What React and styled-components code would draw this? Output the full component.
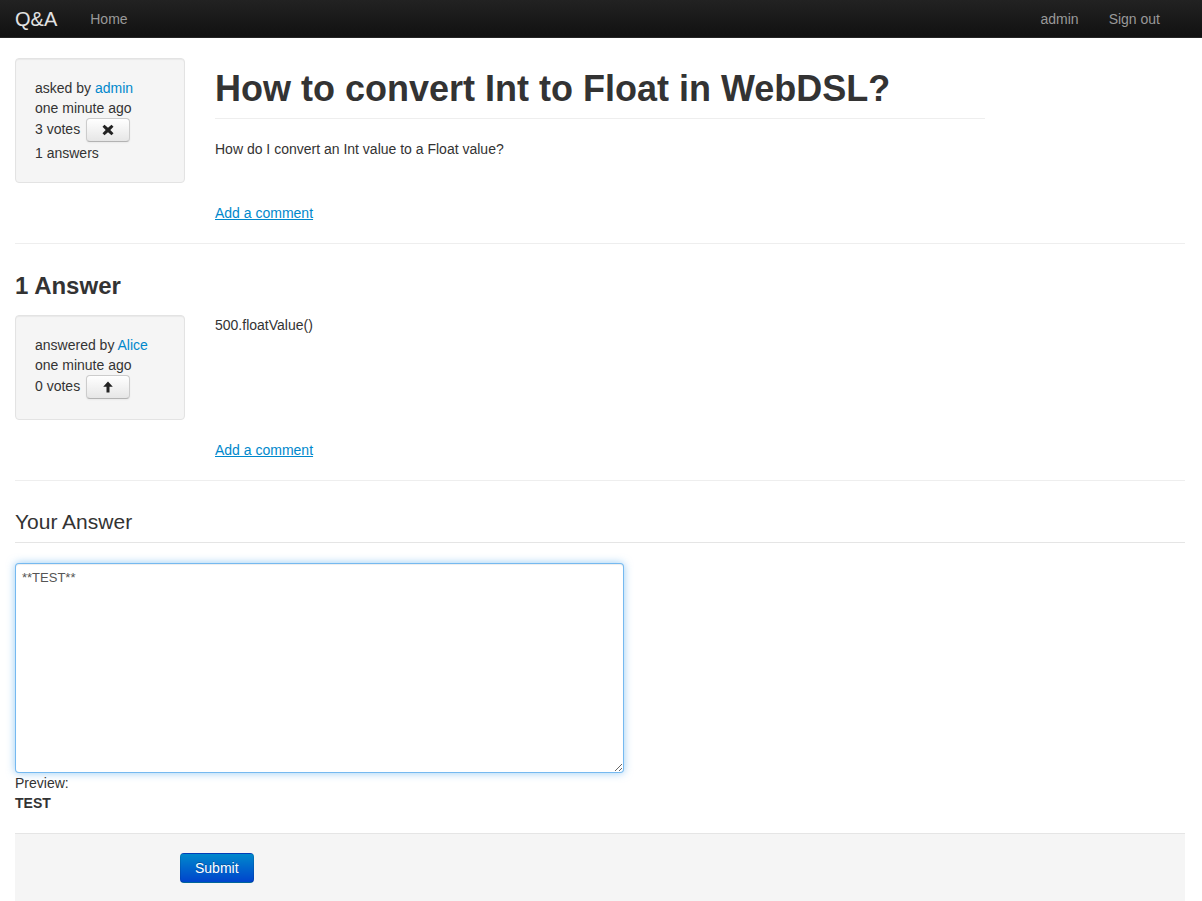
import React from "react";
import styled, { createGlobalStyle } from "styled-components";

const GlobalStyle = createGlobalStyle`
  body {
    margin: 0;
    font-family: "Liberation Sans", Helvetica, Arial, sans-serif;
    font-size: 14px;
    line-height: 20px;
    color: #333;
    background: #fff;
  }
  * { box-sizing: border-box; }
`;

const Navbar = styled.div`
  height: 38px;
  background-image: linear-gradient(to bottom, #222, #111);
  border-bottom: 1px solid #252525;
`;

const NavInner = styled.div`
  width: 1170px;
  margin-left: 15px;
  height: 100%;
  display: flex;
  align-items: center;
`;

const Brand = styled.a`
  font-size: 20px;
  color: #e2e2e2;
  margin-right: 18px;
  text-decoration: none;
`;

const NavGroup = styled.div`
  display: flex;
  margin-left: ${(p) => (p.right ? "auto" : "0")};
  margin-right: ${(p) => (p.right ? "10px" : "0")};
`;

const NavLink = styled.a`
  color: #999;
  padding: 0 15px;
  text-decoration: none;
`;

const Container = styled.div`
  width: 1170px;
  margin-left: 15px;
  padding-top: 20px;
`;

const Row = styled.div`
  display: flex;
  gap: 30px;
  align-items: flex-start;
`;

const Well = styled.div`
  width: 170px;
  flex: none;
  background: #f5f5f5;
  border: 1px solid #e3e3e3;
  border-radius: 4px;
  padding: 19px;
  box-shadow: inset 0 1px 1px rgba(0, 0, 0, 0.05);
`;

const VoteLine = styled.div`
  display: flex;
  align-items: flex-start;
  gap: 6px;
  height: 25px;
  line-height: 22px;
`;

const VoteButton = styled.button`
  width: 44px;
  height: 24px;
  padding: 0;
  display: flex;
  align-items: center;
  justify-content: center;
  background-image: linear-gradient(to bottom, #fff, #e6e6e6);
  border: 1px solid #ccc;
  border-bottom-color: #b3b3b3;
  border-radius: 4px;
  box-shadow: inset 0 1px 0 rgba(255, 255, 255, 0.2), 0 1px 2px rgba(0, 0, 0, 0.05);
`;

const Link = styled.a`
  color: #0088cc;
  text-decoration: ${(p) => (p.underline ? "underline" : "none")};
`;

const Main = styled.div`
  width: 770px;
`;

const Title = styled.h1`
  margin: 11px 0 20px;
  padding-bottom: 9px;
  border-bottom: 1px solid #eee;
  font-size: 36px;
  line-height: 40px;
  font-weight: bold;
  color: #333;
`;

const Para = styled.p`
  margin: 0;
`;

const CommentRow = styled.div`
  padding-left: 200px;
  margin-top: 20px;
`;

const Divider = styled.hr`
  margin: 20px 0;
  border: 0;
  border-top: 1px solid #eee;
  border-bottom: 1px solid #fff;
`;

const SectionTitle = styled.h3`
  margin: 21px 0 9px;
  font-size: 24px;
  line-height: 40px;
  font-weight: bold;
`;

const Legend = styled.div`
  margin-top: 20px;
  font-size: 21px;
  line-height: 40px;
  border-bottom: 1px solid #e5e5e5;
  margin-bottom: 20px;
`;

const AnswerInput = styled.textarea`
  display: block;
  width: 609px;
  height: 210px;
  padding: 4px 6px;
  font-family: "Liberation Sans", Helvetica, Arial, sans-serif;
  font-size: 13px;
  line-height: 20px;
  color: #555;
  border: 1px solid rgba(82, 168, 236, 0.8);
  border-radius: 4px;
  outline: 0;
  box-shadow: inset 0 1px 1px rgba(0, 0, 0, 0.075), 0 0 8px rgba(82, 168, 236, 0.6);
  margin: 0;
`;

const PreviewText = styled.div`
  font-weight: ${(p) => (p.bold ? "bold" : "normal")};
`;

const FormActions = styled.div`
  margin-top: 20px;
  background: #f5f5f5;
  border-top: 1px solid #e5e5e5;
  padding: 19px 20px 20px 165px;
`;

const SubmitButton = styled.button`
  height: 30px;
  padding: 4px 14px;
  font-family: "Liberation Sans", Helvetica, Arial, sans-serif;
  font-size: 14px;
  line-height: 20px;
  color: #fff;
  text-shadow: 0 -1px 0 rgba(0, 0, 0, 0.25);
  background-image: linear-gradient(to bottom, #0088cc, #0044cc);
  border: 1px solid rgba(0, 0, 0, 0.1);
  border-bottom-color: rgba(0, 0, 0, 0.25);
  border-radius: 4px;
`;

const RemoveIcon = () => (
  <svg width="12" height="12" viewBox="0 0 12 12">
    <path
      d="M2.5 0.8 L6 3.8 L9.5 0.8 L11.5 2.8 L8.3 6 L11.5 9.2 L9.5 11.2 L6 8.2 L2.5 11.2 L0.5 9.2 L3.7 6 L0.5 2.8 Z"
      fill="#222"
    />
  </svg>
);

const ArrowUpIcon = () => (
  <svg width="10" height="12" viewBox="0 0 10 12">
    <path d="M5 0.5 L9.8 5.8 L6.5 5.8 L6.5 11.5 L3.5 11.5 L3.5 5.8 L0.2 5.8 Z" fill="#222" />
  </svg>
);

export default function App() {
  return (
    <>
      <GlobalStyle />
      <Navbar>
        <NavInner>
          <Brand>Q&amp;A</Brand>
          <NavGroup>
            <NavLink>Home</NavLink>
          </NavGroup>
          <NavGroup right>
            <NavLink>admin</NavLink>
            <NavLink>Sign out</NavLink>
          </NavGroup>
        </NavInner>
      </Navbar>
      <Container>
        <Row>
          <Well>
            <div>
              asked by <Link>admin</Link>
            </div>
            <div>one minute ago</div>
            <VoteLine>
              3 votes
              <VoteButton>
                <RemoveIcon />
              </VoteButton>
            </VoteLine>
            <div>1 answers</div>
          </Well>
          <Main>
            <Title>How to convert Int to Float in WebDSL?</Title>
            <Para>How do I convert an Int value to a Float value?</Para>
          </Main>
        </Row>
        <CommentRow>
          <Link underline>Add a comment</Link>
        </CommentRow>
        <Divider />

        <SectionTitle>1 Answer</SectionTitle>
        <Row>
          <Well>
            <div>
              answered by <Link>Alice</Link>
            </div>
            <div>one minute ago</div>
            <VoteLine>
              0 votes
              <VoteButton>
                <ArrowUpIcon />
              </VoteButton>
            </VoteLine>
          </Well>
          <Main>
            <Para>500.floatValue()</Para>
          </Main>
        </Row>
        <CommentRow>
          <Link underline>Add a comment</Link>
        </CommentRow>
        <Divider />

        <Legend>Your Answer</Legend>
        <AnswerInput defaultValue="**TEST**" />
        <PreviewText>Preview:</PreviewText>
        <PreviewText bold>TEST</PreviewText>
        <FormActions>
          <SubmitButton>Submit</SubmitButton>
        </FormActions>
      </Container>
    </>
  );
}
